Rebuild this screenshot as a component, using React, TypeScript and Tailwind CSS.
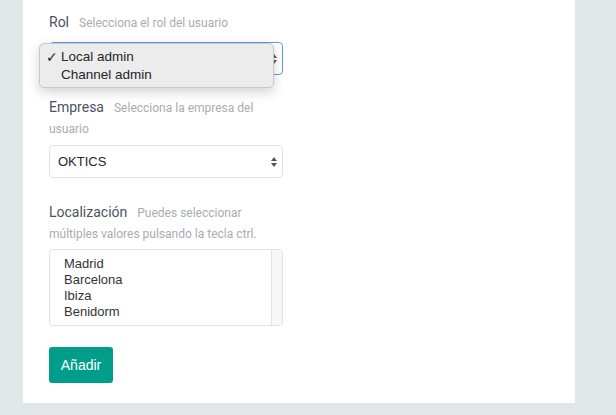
function Arrows() {
  return (
    <svg width="8" height="12" viewBox="0 0 8 12" className="text-[#555]">
      <path d="M4 1 L7 5 L1 5 Z" fill="currentColor" />
      <path d="M4 11 L7 7 L1 7 Z" fill="currentColor" />
    </svg>
  );
}

function Label({ title, hint }: { title: string; hint: string }) {
  return (
    <p className="font-['Roboto',sans-serif] leading-[20px] w-[240px]">
      <span className="text-[14px] text-[#4a5361] mr-[10px]">{title}</span>
      <span className="text-[12px] text-[#a7acb3]">{hint}</span>
    </p>
  );
}

export default function App() {
  const cities = ['Madrid', 'Barcelona', 'Ibiza', 'Benidorm'];

  return (
    <div className="w-[616px] h-[415px] bg-[#e1e6e9] overflow-hidden font-['Liberation_Sans',sans-serif]">
      <div className="ml-[23px] w-[552px] h-[403px] bg-white pl-[26px] pt-[12px] relative">
        <Label title="Rol" hint="Selecciona el rol del usuario" />
        <div className="mt-[9px] w-[234px] h-[33px] rounded-[4px] border border-[#5b9ee6] flex items-center justify-end pr-[4px]">
          <Arrows />
        </div>

        {/* dropdown abierto */}
        <div className="absolute left-[16px] top-[43px] w-[235px] h-[45px] rounded-[5px] bg-[#ececec] border border-[#c8c8c8] shadow-[0_4px_12px_rgba(0,0,0,0.18)] pt-[4px] text-[13.5px] text-[#262626]">
          <div className="flex items-center h-[18px]">
            <span className="w-[21px] pl-[6px] text-[14px] font-['DejaVu_Sans',sans-serif]">✓</span>
            <span>Local admin</span>
          </div>
          <div className="flex items-center h-[18px] pl-[21px]">
            <span>Channel admin</span>
          </div>
        </div>

        <div className="mt-[22px]">
          <Label title="Empresa" hint="Selecciona la empresa del usuario" />
        </div>
        <div className="mt-[6px] w-[234px] h-[33px] rounded-[4px] border border-[#dde3e6] flex items-center justify-between pl-[8px] pr-[4px] text-[13px] text-[#262626]">
          <span>OKTICS</span>
          <Arrows />
        </div>

        <div className="mt-[24px]">
          <Label title="Localización" hint="Puedes seleccionar múltiples valores pulsando la tecla ctrl." />
        </div>
        <div className="mt-[5px] w-[234px] h-[77px] rounded-[4px] border border-[#dde3e6] flex overflow-hidden">
          <div className="flex-1 pl-[14px] pt-[6px] text-[13px] text-[#333] leading-[16px]">
            {cities.map((c) => (
              <div key={c}>{c}</div>
            ))}
          </div>
          <div className="w-[11px] bg-[#f7f7f7] border-l border-[#e3e3e3]" />
        </div>

        <button className="mt-[21px] h-[36px] w-[64px] rounded-[3px] bg-[#009e8a] text-white text-[14px]">
          Añadir
        </button>
      </div>
    </div>
  );
}
